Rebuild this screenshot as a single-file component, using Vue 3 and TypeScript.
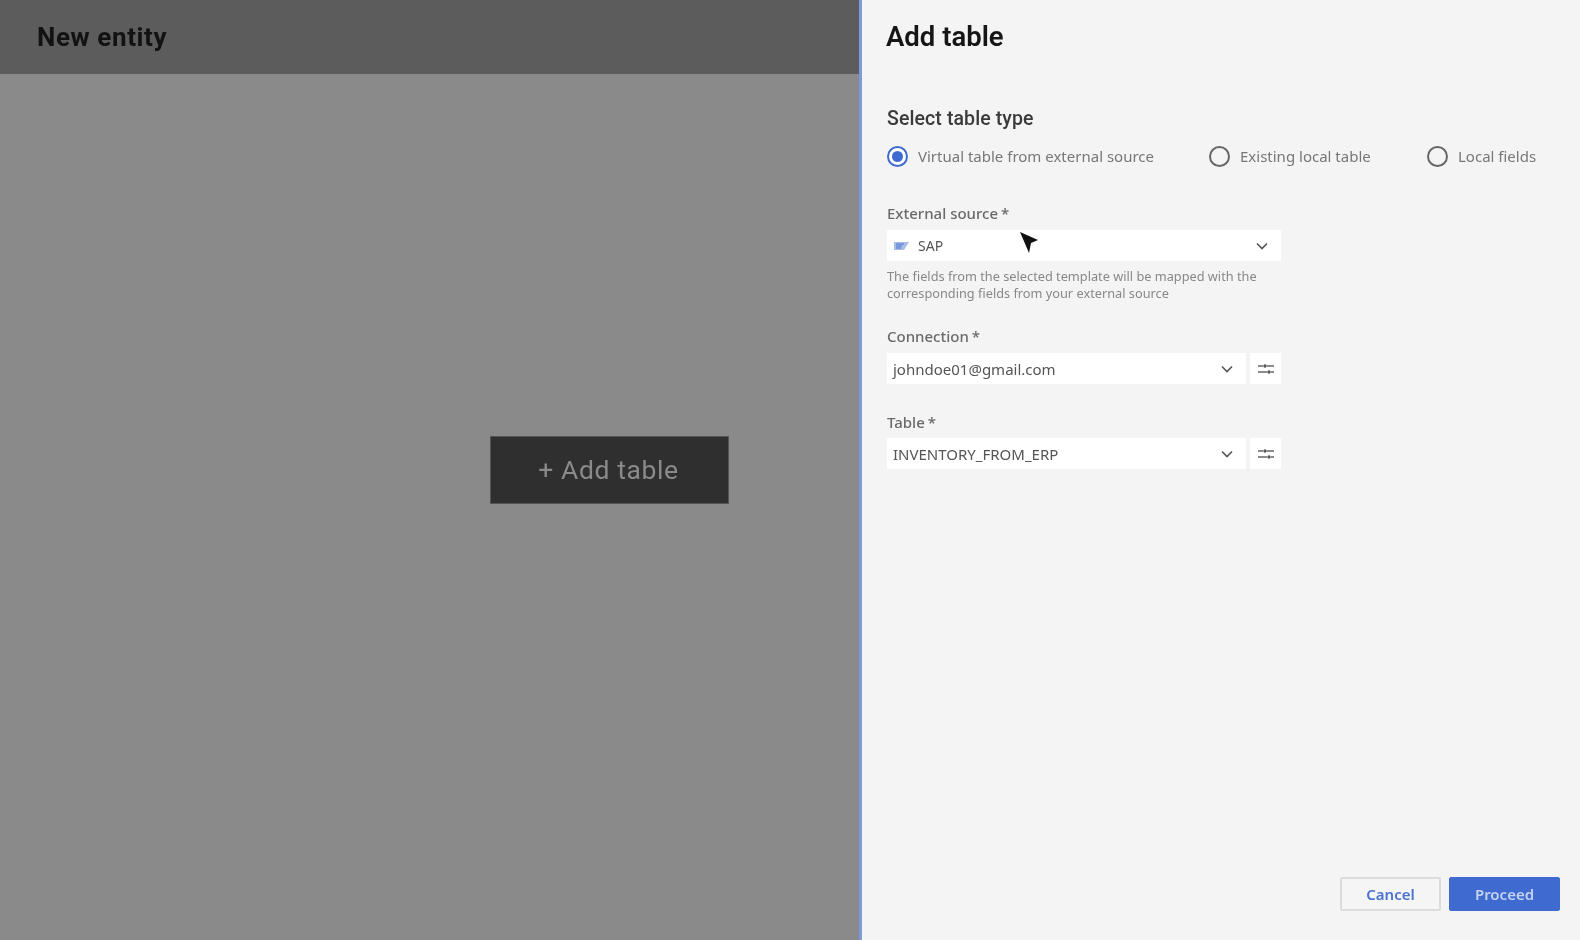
<script setup lang="ts">
interface TableType { label: string; checked: boolean; cls: string }
const types: TableType[] = [
  { label: 'Virtual table from external source', checked: true, cls: 'opt-a' },
  { label: 'Existing local table', checked: false, cls: 'opt-b' },
  { label: 'Local fields', checked: false, cls: 'opt-c' },
]
const selects = [
  { label: 'Connection', value: 'johndoe01@gmail.com', cls: 'conn' },
  { label: 'Table', value: 'INVENTORY_FROM_ERP', cls: 'tbl' },
]
</script>

<template>
  <div class="page">
    <section class="left">
      <header class="left-head"><h1>New entity</h1></header>
      <main class="left-body">
        <button class="add-btn">+ Add table</button>
      </main>
    </section>
    <aside class="panel">
      <h2 class="title">Add table</h2>
      <h3 class="section">Select table type</h3>
      <div class="radios">
        <label v-for="t in types" :key="t.label" class="radio" :class="t.cls">
          <span class="dot" :class="{ on: t.checked }"></span>
          <span>{{ t.label }}</span>
        </label>
      </div>

      <div class="field first">
        <div class="label">External source<span class="star">*</span></div>
        <div class="select full">
          <svg class="sap" width="17" height="10" viewBox="0 0 17 10">
            <path d="M1 1h15l-5 8H1z" fill="#a9bde8" />
            <path d="M3 3h8M3 5h6M3 7h5" stroke="#4a72cf" stroke-width="1" />
          </svg>
          <span class="val sap-val">SAP</span>
          <svg class="chev" width="12" height="8" viewBox="0 0 12 8"><path d="M1 1.5l5 5 5-5" fill="none" stroke="#555" stroke-width="1.6" /></svg>
        </div>
        <svg class="cursor" width="20" height="24" viewBox="0 0 20 24">
          <path d="M1 1l18 8-7 3-2 10z" fill="#111" />
        </svg>
        <p class="hint">The fields from the selected template will be mapped with the<br />corresponding fields from your external source</p>
      </div>

      <div v-for="s in selects" :key="s.label" class="field" :class="s.cls">
        <div class="label">{{ s.label }}<span class="star">*</span></div>
        <div class="row">
          <div class="select grow">
            <span class="val">{{ s.value }}</span>
            <svg class="chev" width="12" height="8" viewBox="0 0 12 8"><path d="M1 1.5l5 5 5-5" fill="none" stroke="#555" stroke-width="1.6" /></svg>
          </div>
          <div class="tune">
            <svg width="18" height="12" viewBox="0 0 18 12">
              <path d="M1 3h5M10 3h7M1 9h9M14 9h3" stroke="#666" stroke-width="1.3" />
              <circle cx="8" cy="3" r="1.7" fill="#555" />
              <circle cx="12" cy="9" r="1.7" fill="#555" />
            </svg>
          </div>
        </div>
      </div>

      <footer class="actions">
        <button class="cancel">Cancel</button>
        <button class="proceed">Proceed</button>
      </footer>
    </aside>
  </div>
</template>

<style>
html, body { margin: 0; padding: 0; }
</style>

<style scoped>
.page { display: flex; width: 1580px; height: 940px; overflow: hidden; font-family: "Noto Sans", sans-serif; filter: blur(0.6px); }
.left { width: 859px; flex: none; display: flex; flex-direction: column; background: #8a8a8a; }
.left-head { height: 74px; flex: none; background: #5c5c5c; box-sizing: border-box; padding-left: 37px; display: flex; align-items: center; }
.left-head h1 { margin: 0; font: 700 26px Roboto, sans-serif; letter-spacing: 0.6px; color: #121212; }
.left-body { flex: 1; padding: 362px 0 0 490px; }
.add-btn { width: 239px; height: 68px; background: #2f2f2f; border: 1px solid #555; color: #8a8a8a; font: 400 26.5px Roboto, sans-serif; letter-spacing: 0.6px; padding: 0 2px 2px 0; }
.panel { flex: 1; position: relative; border-left: 3px solid #7d9bd6; background: #f4f4f4; box-sizing: border-box; padding: 0 20px 0 23px; display: flex; flex-direction: column; }
.title { margin: 21px 0 0 1px; font: 600 27.5px/32px Roboto, sans-serif; color: #161616; }
.section { margin: 54px 0 0 2px; font: 500 19.5px/24px Roboto, sans-serif; color: #3a3a3a; letter-spacing: 0.1px; }
.radios { display: flex; margin: 13px 0 0 2px; height: 24px; }
.radio { display: flex; align-items: center; gap: 10px; font-size: 15px; color: #777; }
.opt-a { width: 322px; }
.opt-b { width: 218px; }
.dot { width: 21px; height: 21px; border-radius: 50%; border: 2px solid #666; box-sizing: border-box; flex: none; position: relative; }
.dot.on { border-color: #3f6ad0; background: #fff; }
.dot.on::after { content: ""; position: absolute; inset: 3px; border-radius: 50%; background: #3f6ad0; }
.field { margin: 26px 0 0 2px; width: 394px; position: relative; }
.field.first { margin-top: 35px; }
.field.conn { margin-top: 24px; }
.field.tbl { margin-top: 28px; }
.label { font-size: 15px; line-height: 20px; font-weight: 500; color: #6a6a6a; margin-bottom: 7px; }
.tbl .label { margin-bottom: 6px; }
.star { margin-left: 3px; }
.select { height: 31px; background: #fff; display: flex; align-items: center; box-sizing: border-box; padding: 0 6px; }
.val { font-size: 15px; color: #555; flex: 1; }
.sap-val { font-size: 14px; }
.sap { margin-right: 8px; flex: none; }
.chev { flex: none; margin-right: 7px; }
.row { display: flex; gap: 4px; }
.grow { flex: 1; }
.tune { width: 31px; height: 31px; background: #fff; display: flex; align-items: center; justify-content: center; }
.hint { margin: 7px 0 0; font-size: 12.75px; line-height: 17px; color: #888; }
.cursor { position: absolute; left: 132px; top: 28px; }
.actions { margin-top: auto; margin-bottom: 29px; display: flex; justify-content: flex-end; gap: 8px; }
.actions button { height: 34px; font: 600 15px "Noto Sans", sans-serif; border-radius: 2px; padding: 0; }
.cancel { width: 101px; background: #f5f5f5; border: 2px solid #dcdcdc; color: #4a72cf; }
.proceed { width: 111px; background: #3f6ad0; border: 1px solid #3f6ad0; color: #c3d2f2; }
</style>
